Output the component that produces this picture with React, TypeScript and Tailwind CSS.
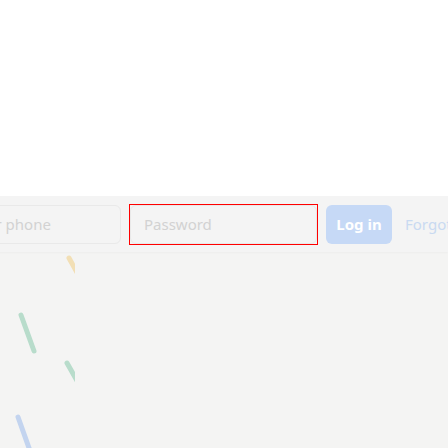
const font = { fontFamily: '"Noto Sans", "Open Sans", sans-serif' };

function Field({ placeholder, width, flagged }: { placeholder: string; width: string; flagged?: boolean }) {
  return (
    <div className={`relative shrink-0 ${width}`}>
      <div className="h-[39px] rounded-md border border-[#e9e9e9] bg-[#f4f4f4] px-[13px] flex items-center text-[15px] text-[#d2d2d2]">
        {placeholder}
      </div>
      {flagged && <div className="absolute -inset-[1px] border border-[#ff0000]" />}
    </div>
  );
}

export default function App() {
  return (
    <div className="w-[448px] h-[448px] overflow-hidden bg-white flex flex-col" style={font}>
      <div className="h-[196px] shrink-0 bg-white" />

      <div className="h-[56px] shrink-0 bg-[#f4f4f4] flex items-center gap-[9px] ml-[-70px] pt-[1px] shadow-[0_1px_2px_rgba(0,0,0,0.03)] relative z-10">
        <Field placeholder="Email or phone" width="w-[191px]" />
        <Field placeholder="Password" width="w-[187px]" flagged />
        <button className="ml-[0px] h-[39px] w-[66px] shrink-0 rounded-md bg-[#c6d9f6] text-white font-bold text-[15px]">
          Log in
        </button>
        <span className="ml-[4px] text-[15px] text-[#c9daf1] whitespace-nowrap">Forgotten account?</span>
      </div>

      <div className="flex-1 bg-[#f4f4f3] flex">
        <svg width="75" height="196" viewBox="0 0 75 196" className="shrink-0">
          <g strokeWidth="5" strokeLinecap="round" fill="none">
            <line x1="69" y1="6" x2="80" y2="26" stroke="#f2dfb5" />
            <line x1="21" y1="63" x2="34" y2="99" stroke="#b8dccb" />
            <line x1="67" y1="111" x2="80" y2="134" stroke="#b8dccb" />
            <line x1="18" y1="165" x2="34" y2="210" stroke="#c3d4ef" />
          </g>
        </svg>
      </div>
    </div>
  );
}
